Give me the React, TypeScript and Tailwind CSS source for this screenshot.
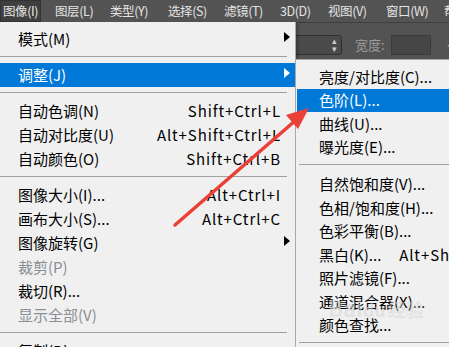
const font = { fontFamily: '"Noto Sans CJK SC", "Noto Sans", sans-serif' };

type Item = {
  label: string;
  shortcut?: string;
  sub?: boolean;
  active?: boolean;
  disabled?: boolean;
};

const mainGroups: Item[][] = [
  [{ label: "模式(M)", sub: true }],
  [{ label: "调整(J)", sub: true, active: true }],
  [
    { label: "自动色调(N)", shortcut: "Shift+Ctrl+L" },
    { label: "自动对比度(U)", shortcut: "Alt+Shift+Ctrl+L" },
    { label: "自动颜色(O)", shortcut: "Shift+Ctrl+B" },
  ],
  [
    { label: "图像大小(I)...", shortcut: "Alt+Ctrl+I" },
    { label: "画布大小(S)...", shortcut: "Alt+Ctrl+C" },
    { label: "图像旋转(G)", sub: true },
    { label: "裁剪(P)", disabled: true },
    { label: "裁切(R)..." },
    { label: "显示全部(V)", disabled: true },
  ],
  [{ label: "复制(D)..." }],
];

const subGroups: Item[][] = [
  [
    { label: "亮度/对比度(C)..." },
    { label: "色阶(L)...", active: true },
    { label: "曲线(U)..." },
    { label: "曝光度(E)..." },
  ],
  [
    { label: "自然饱和度(V)..." },
    { label: "色相/饱和度(H)..." },
    { label: "色彩平衡(B)..." },
    { label: "黑白(K)...", shortcut: "Alt+Shift+Ctrl+B" },
    { label: "照片滤镜(F)..." },
    { label: "通道混合器(X)..." },
    { label: "颜色查找..." },
  ],
  [{ label: "反相(I)" }],
];

const menuBar = [
  { label: "图像(I)", w: "w-[53px]", on: true },
  { label: "图层(L)", w: "w-[55px]" },
  { label: "类型(Y)", w: "w-[58px]" },
  { label: "选择(S)", w: "w-[56px]" },
  { label: "滤镜(T)", w: "w-[56px]" },
  { label: "3D(D)", w: "w-[48px]" },
  { label: "视图(V)", w: "w-[58px]" },
  { label: "窗口(W)", w: "w-[58px]" },
  { label: "帮助(H)", w: "w-[58px]" },
];

function Arrow({ white }: { white?: boolean }) {
  return (
    <svg width="6" height="10" viewBox="0 0 6 10" className="mb-[4px]">
      <path d="M0 0 L6 5 L0 10 Z" fill={white ? "#ffffff" : "#000000"} />
    </svg>
  );
}

function MainRow({ item }: { item: Item }) {
  return (
    <div
      className={`flex h-[24px] items-center pl-[18px] text-[15px] ${
        item.active ? "bg-[#0078d7] text-white" : item.disabled ? "text-[#8a8f96]" : "text-black"
      }`}
    >
      <span className="flex-1 whitespace-nowrap">{item.label}</span>
      {item.shortcut && (
        <span className="whitespace-nowrap tracking-[0.9px]">{item.shortcut}</span>
      )}
      <span className="flex w-[14px] items-center pl-[3px]">
        {item.sub && <Arrow white={item.active} />}
      </span>
    </div>
  );
}

function SubRow({ item }: { item: Item }) {
  return (
    <div
      className={`flex h-[23.5px] items-center pl-[22px] text-[15px] ${
        item.active ? "bg-[#0078d7] text-white" : "text-black"
      }`}
    >
      <span className="w-[109px] whitespace-nowrap">{item.label}</span>
      {item.shortcut && (
        <span className="whitespace-nowrap tracking-[0.9px]">{item.shortcut}</span>
      )}
    </div>
  );
}

export default function App() {
  return (
    <div
      className="relative h-[347px] w-[449px] overflow-hidden bg-[#535353]"
      style={font}
    >
      {/* menu bar */}
      <div className="flex h-[22px] items-center bg-[#535353] text-[12.5px] tracking-[-0.4px] text-[#e4e4e4]">
        {menuBar.map((m) => (
          <div key={m.label} className={`${m.w} shrink-0`}>
            <span
              className={`inline-flex h-[22px] items-center whitespace-nowrap px-[2px] ${
                m.on ? "border border-[#333] bg-[#3f3f3f]" : ""
              }`}
            >
              {m.label}
            </span>
          </div>
        ))}
      </div>

      {/* options bar */}
      <div className="flex h-[37px] items-center border-t border-[#3e3e3e] pl-[250px] text-[13px] text-[#9c9c9c]">
        <div className="mt-[8px] flex h-[20px] w-[92px] shrink-0 items-center justify-end rounded-[3px] border border-[#2e2e2e] bg-[#4a4a4a] pr-[4px] text-[9px] leading-[8px] text-[#cfcfcf]">
          <span className="flex flex-col items-center">
            <span>▴</span>
            <span>▾</span>
          </span>
        </div>
        <span className="ml-[13px] mt-[8px] shrink-0 whitespace-nowrap">宽度:</span>
        <div className="ml-[6px] mt-[8px] h-[20px] w-[40px] shrink-0 border border-[#3a3a3a] bg-[#464646]" />
        <span className="ml-[16px] mt-[8px] shrink-0 text-[11px] text-[#c8c8c8]">◀</span>
      </div>

      {/* main menu */}
      <div className="absolute left-0 top-[22px] w-[296px] border-r border-[#a9a9a9] bg-[#f0f0f0] pt-[5px] shadow-[2px_2px_3px_rgba(0,0,0,0.25)]">
        {mainGroups.map((g, gi) => (
          <div key={gi}>
            {gi > 0 && (
              <div className="h-[12px] pt-[5px] pr-[8px]">
                <div className="h-px bg-[#a0a0a0]" />
              </div>
            )}
            {g.map((it) => (
              <MainRow key={it.label} item={it} />
            ))}
          </div>
        ))}
      </div>

      {/* adjustments submenu */}
      <div className="absolute left-[295px] top-[59px] w-[230px] border-l border-t border-[#a9a9a9] bg-[#f0f0f0] pl-[1px] pt-[5px]">
        {subGroups.map((g, gi) => (
          <div key={gi}>
            {gi > 0 && (
              <div className="h-[13.5px] pl-[2px] pt-[5px]">
                <div className="h-px bg-[#a0a0a0]" />
              </div>
            )}
            {g.map((it) => (
              <SubRow key={it.label} item={it} />
            ))}
          </div>
        ))}
      </div>

      {/* watermark */}
      <div className="pointer-events-none absolute left-[328px] top-[296px] text-[22px] font-bold leading-none text-[#d6d6d6] opacity-50">
        Bai<span className="text-[18px]">du</span>
        <span className="ml-[2px] text-[18px]">经验</span>
      </div>

      {/* red annotation arrow */}
      <svg
        className="pointer-events-none absolute left-0 top-0"
        width="449"
        height="347"
        viewBox="0 0 449 347"
      >
        <line x1="175" y1="225" x2="296" y2="120" stroke="#ec3f36" strokeWidth="3.5" strokeLinecap="round" />
        <polygon points="309,108 298,129 286,115" fill="#ec3f36" />
      </svg>
    </div>
  );
}
